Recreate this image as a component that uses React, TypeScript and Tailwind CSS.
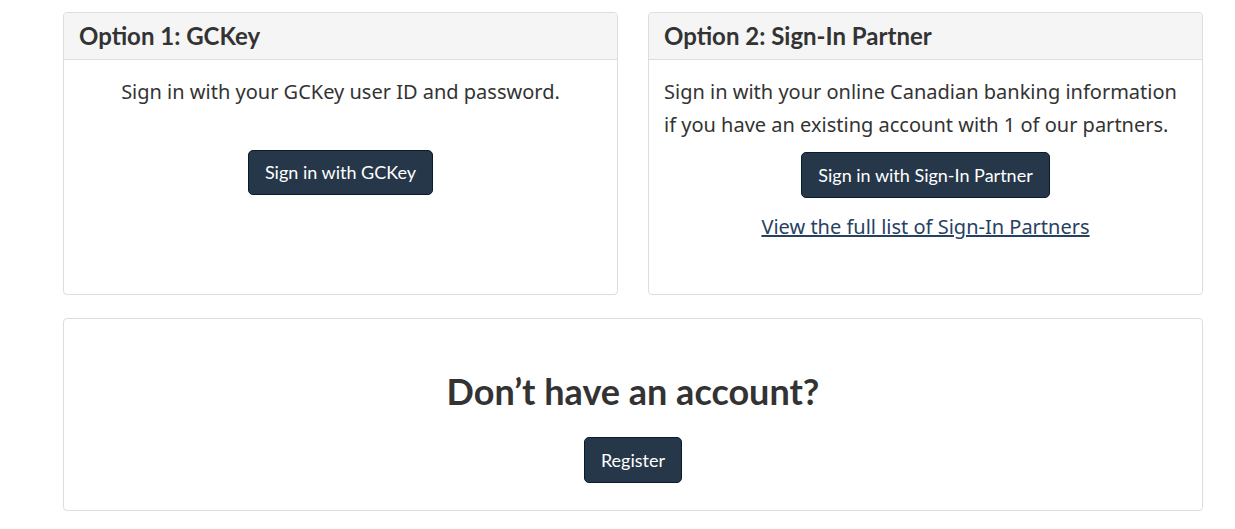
const lato = "font-['Lato','Liberation_Sans',sans-serif]";

function Btn({ children, tall = false }: { children: string; tall?: boolean }) {
  return (
    <button
      className={`${lato} rounded-[5px] border border-[#091c2d] bg-[#26374a] px-4 text-[18px] leading-[25px] text-white ${
        tall ? 'py-[9.5px]' : 'py-[9px]'
      }`}
    >
      {children}
    </button>
  );
}

function Panel({ title, children }: { title: string; children: React.ReactNode }) {
  return (
    <div className="h-[283px] rounded-[4px] border border-[#dddddd] bg-white">
      <div className="rounded-t-[4px] border-b border-[#dddddd] bg-[#f5f5f5] px-[15px] py-[9px]">
        <h2 className={`${lato} text-[24px] font-bold leading-[28px] text-[#333333]`}>{title}</h2>
      </div>
      <div className="px-[15px] pt-[15px]">{children}</div>
    </div>
  );
}

export default function App() {
  return (
    <div className="min-h-[529px] bg-white font-['Noto_Sans',sans-serif] text-[20px] leading-[33px] text-[#333333]">
      <div className="ml-[63px] w-[1140px] pt-[12px]">
        <div className="grid grid-cols-2 gap-[30px]">
          <Panel title="Option 1: GCKey">
            <p className="text-center">Sign in with your GCKey user ID and password.</p>
            <div className="mt-[42px] flex justify-center">
              <Btn>Sign in with GCKey</Btn>
            </div>
          </Panel>
          <Panel title="Option 2: Sign-In Partner">
            <p>
              Sign in with your online Canadian banking information if you have an existing account with 1 of our
              partners.
            </p>
            <div className="mt-[11px] flex justify-center">
              <Btn tall>Sign in with Sign-In Partner</Btn>
            </div>
            <p className="mt-[12px] text-center">
              <a href="#" className="text-[#284162] underline">
                View the full list of Sign-In Partners
              </a>
            </p>
          </Panel>
        </div>
        <div className="mt-[23px] flex h-[193px] flex-col items-center rounded-[4px] border border-[#dddddd] pt-[49px]">
          <h2 className={`${lato} text-[36px] font-bold leading-[46px] text-[#333333]`}>Don’t have an account?</h2>
          <div className="mt-[23px]">
            <Btn tall>Register</Btn>
          </div>
        </div>
      </div>
    </div>
  );
}
